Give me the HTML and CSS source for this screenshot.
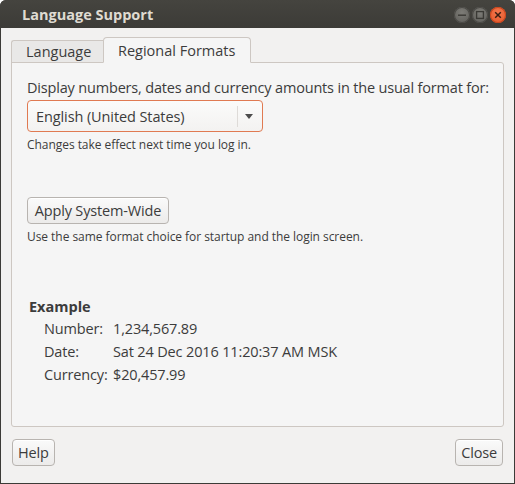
FILE: index.html
```html
<!DOCTYPE html>
<html>
<head>
<meta charset="utf-8">
<link rel="stylesheet" href="styles.css">
</head>
<body>
<div class="window">
  <div class="titlebar">
    <span class="title">Language Support</span>
    <div class="controls">
      <span class="wbtn min"><svg width="16" height="16" viewBox="0 0 16 16"><rect x="4" y="7.5" width="8" height="1.4" fill="#3a3935"/></svg></span>
      <span class="wbtn max"><svg width="16" height="16" viewBox="0 0 16 16"><rect x="4.6" y="4.6" width="6.8" height="6.8" fill="none" stroke="#3a3935" stroke-width="1.3"/></svg></span>
      <span class="wbtn close"><svg width="16" height="16" viewBox="0 0 16 16"><path d="M5.2 5.2 L10.8 10.8 M10.8 5.2 L5.2 10.8" stroke="#3a1e12" stroke-width="1.5"/></svg></span>
    </div>
  </div>
  <div class="content">
    <div class="notebook">
      <div class="tabs">
        <div class="tab">Language</div>
        <div class="tab active">Regional Formats</div>
      </div>
      <div class="panel">
        <p class="label">Display numbers, dates and currency amounts in the usual format for:</p>
        <div class="combo">
          <span class="combo-text">English (United States)</span>
          <span class="combo-sep"></span>
          <span class="combo-arrow"></span>
        </div>
        <p class="hint">Changes take effect next time you log in.</p>
        <button class="btn apply">Apply System-Wide</button>
        <p class="hint">Use the same format choice for startup and the login screen.</p>
        <div class="example">
          <div class="ex-title">Example</div>
          <div class="ex-grid">
            <span>Number:</span><span>1,234,567.89</span>
            <span>Date:</span><span>Sat 24 Dec 2016 11:20:37 AM MSK</span>
            <span>Currency:</span><span>$20,457.99</span>
          </div>
        </div>
      </div>
    </div>
    <div class="actions">
      <button class="btn">Help</button>
      <button class="btn">Close</button>
    </div>
  </div>
</div>
</body>
</html>
```

FILE: styles.css
```css
html, body {
  margin: 0;
  padding: 0;
  background: #ffffff;
}
.window {
  width: 515px;
  height: 484px;
  box-sizing: border-box;
  display: flex;
  flex-direction: column;
  font-family: "Open Sans", "Noto Sans", sans-serif;
  color: #3c3c3c;
  background: #3c3b37;
  border-radius: 6px 6px 0 0;
  overflow: hidden;
}
.titlebar {
  height: 28px;
  flex: none;
  display: flex;
  align-items: center;
  padding: 0 9px 0 22px;
  background: linear-gradient(#45443f, #3c3b37);
}
.title {
  flex: 1;
  font-weight: bold;
  font-size: 14.5px;
  color: #dfdbd2;
  padding-top: 1px;
}
.controls {
  display: flex;
  gap: 2px;
  padding-top: 1px;
}
.wbtn {
  width: 16px;
  height: 16px;
  border-radius: 50%;
  display: block;
}
.wbtn svg { display: block; }
.min, .max {
  background: radial-gradient(circle at 50% 35%, #7d7c77, #5b5a56);
  box-shadow: inset 0 0 0 1px #4a4945;
}
.close {
  background: radial-gradient(circle at 50% 35%, #f4774e, #e45525);
  box-shadow: inset 0 0 0 1px #c9461e;
}
.content {
  flex: 1;
  margin: 0 1px 1px 1px;
  background: #f2f1f0;
  display: flex;
  flex-direction: column;
  padding: 9px 10px 0 10px;
}
.notebook {
  display: flex;
  flex-direction: column;
  height: 390px;
}
.tabs {
  display: flex;
  align-items: flex-end;
  height: 26px;
  position: relative;
  z-index: 1;
  margin-bottom: -1px;
}
.tab {
  box-sizing: border-box;
  height: 23px;
  width: 92px;
  padding-left: 14px;
  font-size: 14.5px;
  line-height: 22px;
  background: #e9e8e7;
  border: 1px solid #cdc7c2;
  border-right: none;
  border-bottom: 1px solid #cdc7c2;
  border-radius: 3px 0 0 0;
  color: #3c3c3c;
}
.tab.active {
  height: 26px;
  width: 148px;
  padding-left: 14px;
  line-height: 25px;
  background: #f5f5f5;
  border: 1px solid #cdc7c2;
  border-bottom: 1px solid #f5f5f5;
  border-radius: 4px 4px 0 0;
}
.panel {
  flex: 1;
  background: #f5f5f5;
  border: 1px solid #cdc7c2;
  border-radius: 0 3px 3px 3px;
  padding: 15px 14px 0 15px;
}
.label {
  margin: 0;
  font-size: 14.5px;
  line-height: 20px;
  letter-spacing: -0.18px;
  white-space: nowrap;
}
.combo {
  margin-top: 2px;
  width: 236px;
  height: 32px;
  box-sizing: border-box;
  border: 1px solid #e07a52;
  border-radius: 4px;
  background: linear-gradient(#fbfbfa, #f3f2f1);
  display: flex;
  align-items: center;
  padding-left: 8px;
}
.combo-text {
  flex: 1;
  font-size: 14.5px;
  letter-spacing: -0.1px;
}
.combo-sep {
  width: 1px;
  height: 21px;
  background: #dedbd8;
  margin-right: 7px;
}
.combo-arrow {
  width: 0;
  height: 0;
  border-left: 4px solid transparent;
  border-right: 4px solid transparent;
  border-top: 5px solid #4c4c4c;
  margin-right: 9px;
}
.hint {
  margin: 4px 0 0 0;
  font-size: 12px;
  line-height: 17px;
  letter-spacing: -0.05px;
}
.btn {
  font-family: "Open Sans", "Noto Sans", sans-serif;
  font-size: 14.5px;
  color: #3c3c3c;
  background: linear-gradient(#fafafa, #ecebea);
  border: 1px solid #b8b4b0;
  border-radius: 4px;
  height: 27px;
  padding: 0 5px;
  letter-spacing: -0.15px;
  box-shadow: inset 0 1px 0 #ffffff;
}
.apply {
  display: block;
  margin-top: 44px;
  width: 142px;
}
.example {
  margin-top: 52px;
  padding-left: 2px;
}
.ex-title {
  font-weight: bold;
  font-size: 14.5px;
  line-height: 20px;
}
.ex-grid {
  margin-top: 2px;
  padding-left: 15px;
  display: grid;
  grid-template-columns: 69px auto;
  row-gap: 3px;
  font-size: 14.5px;
  line-height: 20px;
  letter-spacing: -0.15px;
}
.actions {
  display: flex;
  justify-content: space-between;
  padding: 12px 1px 0 1px;
}
```
